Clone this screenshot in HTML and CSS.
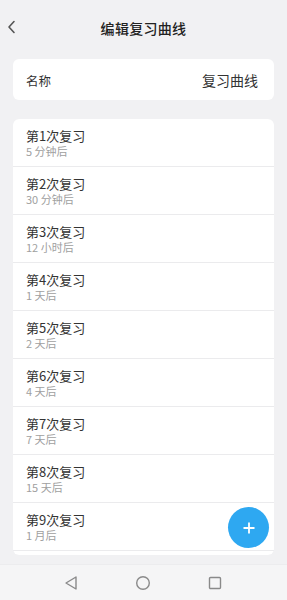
FILE: index.html
```html
<!DOCTYPE html>
<html lang="zh-CN">
<head>
    <meta charset="utf-8">
    <meta name="viewport" content="width=device-width, initial-scale=1.0">
    <title>编辑复习曲线</title>
    <link rel="stylesheet" href="styles.css">
</head>
<body>
    <div class="page">
        <div class="header">
            <svg class="back" width="10" height="14" viewBox="0 0 10 14">
                <path d="M7 1.5 L2 7 L7 12.5" fill="none" stroke="#555" stroke-width="1.6" stroke-linecap="round" stroke-linejoin="round"/>
            </svg>
            <div class="title">编辑复习曲线</div>
        </div>

        <div class="main">
            <div class="name-card">
                <span class="name-label">名称</span>
                <span class="name-value">复习曲线</span>
            </div>

            <div class="list">
                <div class="row"><div class="row-title">第1次复习</div><div class="row-sub">5 分钟后</div></div>
                <div class="row"><div class="row-title">第2次复习</div><div class="row-sub">30 分钟后</div></div>
                <div class="row"><div class="row-title">第3次复习</div><div class="row-sub">12 小时后</div></div>
                <div class="row"><div class="row-title">第4次复习</div><div class="row-sub">1 天后</div></div>
                <div class="row"><div class="row-title">第5次复习</div><div class="row-sub">2 天后</div></div>
                <div class="row"><div class="row-title">第6次复习</div><div class="row-sub">4 天后</div></div>
                <div class="row"><div class="row-title">第7次复习</div><div class="row-sub">7 天后</div></div>
                <div class="row"><div class="row-title">第8次复习</div><div class="row-sub">15 天后</div></div>
                <div class="row"><div class="row-title">第9次复习</div><div class="row-sub">1 月后</div></div>
                <div class="row"><div class="row-title">第10次复习</div><div class="row-sub">3 月后</div></div>
            </div>

            <div class="fab">
                <svg width="14" height="14" viewBox="0 0 14 14">
                    <path d="M7 1.5 V12.5 M1.5 7 H12.5" stroke="#fff" stroke-width="1.8"/>
                </svg>
            </div>
        </div>

        <div class="navbar">
            <svg width="16" height="16" viewBox="0 0 16 16">
                <path d="M13 2 L3 8 L13 14 Z" fill="none" stroke="#8a8a8a" stroke-width="1.4" stroke-linejoin="round"/>
            </svg>
            <svg width="16" height="16" viewBox="0 0 16 16">
                <circle cx="8" cy="8" r="6.3" fill="none" stroke="#8a8a8a" stroke-width="1.4"/>
            </svg>
            <svg width="16" height="16" viewBox="0 0 16 16">
                <rect x="2.5" y="2.5" width="11" height="11" rx="1" fill="none" stroke="#8a8a8a" stroke-width="1.4"/>
            </svg>
        </div>
    </div>
</body>
</html>
```

FILE: styles.css
```css
html {
    font-family: 'Noto Sans CJK SC', 'Noto Sans', sans-serif;
}

body {
    margin: 0;
    background: #f1f1f3;
    color: #333;
}

.page {
    width: 287px;
    height: 600px;
    display: flex;
    flex-direction: column;
    overflow: hidden;
}

.header {
    position: relative;
    height: 56px;
    display: flex;
    align-items: center;
    justify-content: center;
}

.back {
    position: absolute;
    left: 7px;
    top: 20px;
}

.title {
    font-size: 14px;
    font-weight: 500;
    color: #222;
    letter-spacing: 0.3px;
}

.main {
    position: relative;
    flex: 1;
    display: flex;
    flex-direction: column;
    padding: 3px 13px 0 13px;
}

.name-card {
    height: 41px;
    background: #fff;
    border-radius: 6px;
    display: flex;
    align-items: center;
    justify-content: space-between;
    padding: 0 16px 0 13px;
    margin-bottom: 19px;
}

.name-label {
    font-size: 12.5px;
    color: #333;
    padding-top: 2px;
}

.name-value {
    font-size: 14px;
    color: #333;
}

.list {
    height: 436px;
    border-radius: 6px;
    overflow: hidden;
    display: flex;
    flex-direction: column;
    gap: 1px;
    background: #ebebed;
}

.row {
    flex-shrink: 0;
    height: 47px;
    background: #fff;
    padding: 1px 13px 0 13px;
    box-sizing: border-box;
    display: flex;
    flex-direction: column;
    justify-content: center;
}

.row-title {
    font-size: 13px;
    line-height: 17px;
    color: #333;
}

.row-sub {
    font-size: 11px;
    line-height: 15px;
    color: #a0a0a0;
}

.fab {
    position: absolute;
    left: 228px;
    top: 451px;
    width: 41px;
    height: 41px;
    border-radius: 50%;
    background: #2ea8f1;
    display: flex;
    align-items: center;
    justify-content: center;
}

.navbar {
    height: 35px;
    background: #f5f5f6;
    border-top: 1px solid #ececee;
    display: flex;
    align-items: center;
    justify-content: space-between;
    padding: 0 64px 0 63px;
}
```
